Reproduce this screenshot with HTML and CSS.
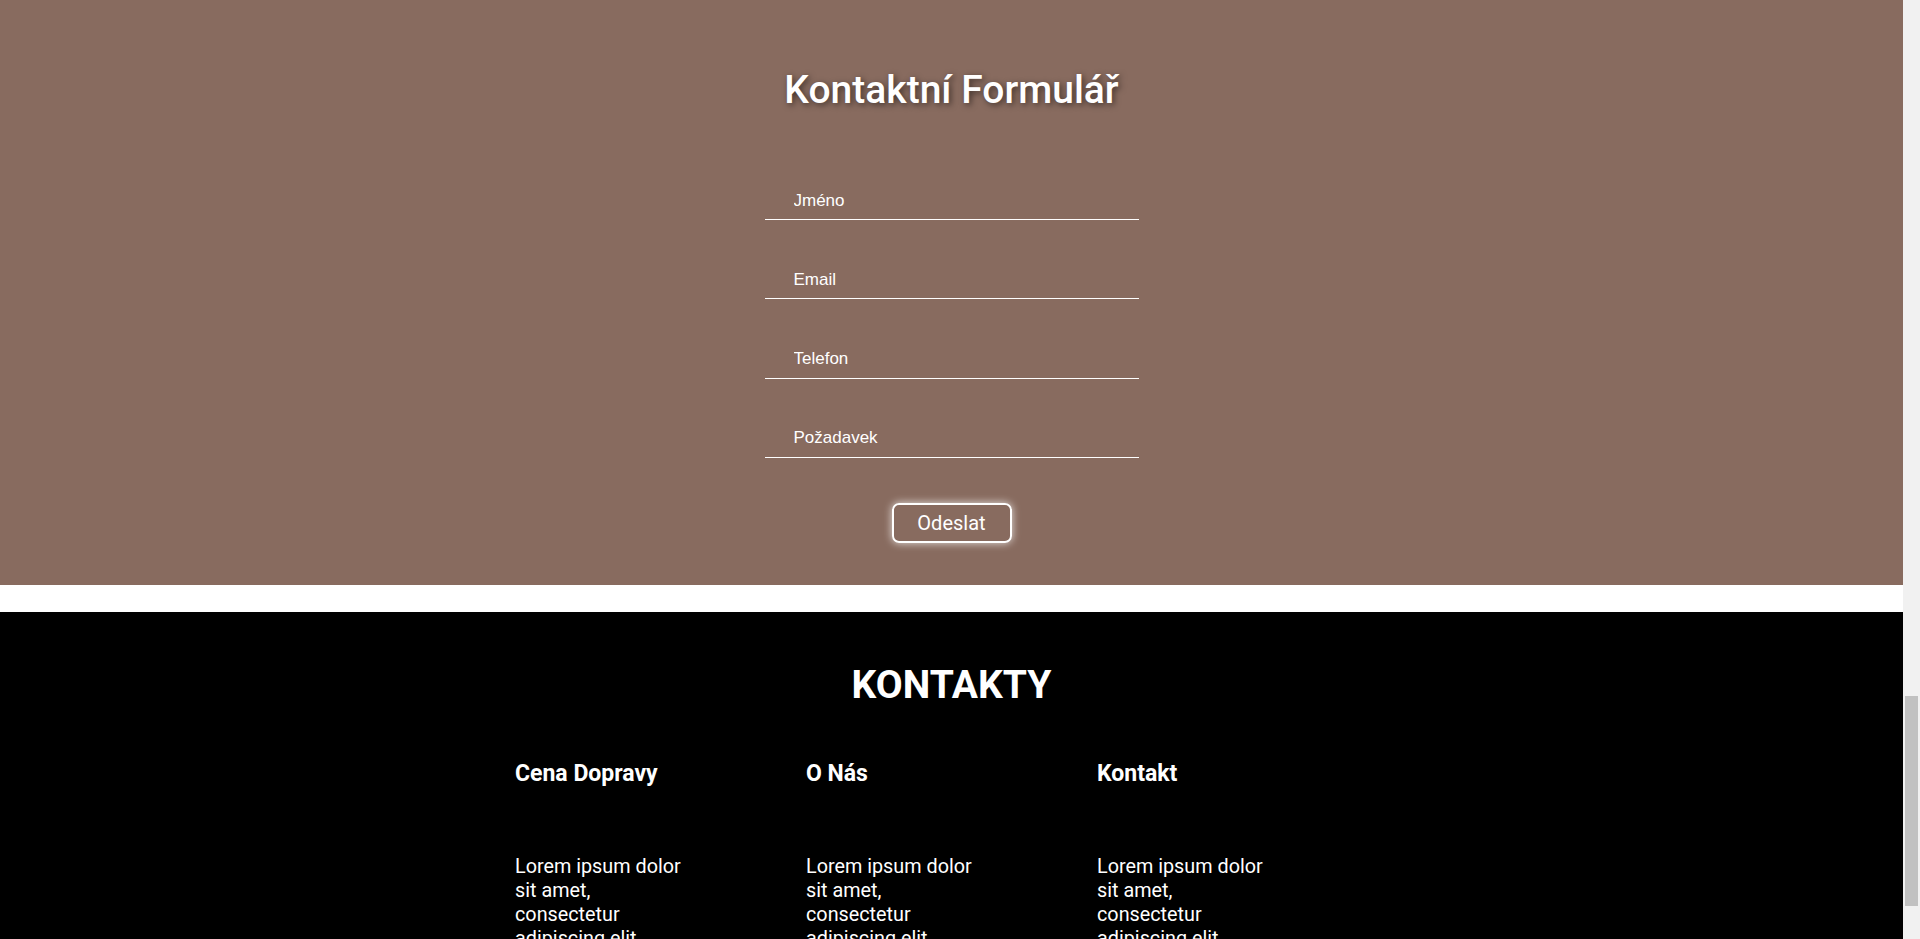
FILE: index.html
```html
<!DOCTYPE html>
<html lang="cs">
<head>
<meta charset="utf-8">
<title>Kontaktní Formulář</title>
<link rel="stylesheet" href="styles.css">
</head>
<body>
<section class="contact">
  <h1 class="contact-title">Kontaktní Formulář</h1>
  <form class="contact-form">
    <input class="field" type="text" placeholder="Jméno">
    <input class="field" type="email" placeholder="Email">
    <input class="field" type="tel" placeholder="Telefon">
    <input class="field" type="text" placeholder="Požadavek">
    <button class="submit" type="button">Odeslat</button>
  </form>
</section>
<div class="spacer"></div>
<footer class="footer">
  <h2 class="footer-title">KONTAKTY</h2>
  <div class="footer-cols">
    <div class="col">
      <h3 class="col-title">Cena Dopravy</h3>
      <p class="col-text">Lorem ipsum dolor sit amet, consectetur adipiscing elit.</p>
    </div>
    <div class="col">
      <h3 class="col-title">O Nás</h3>
      <p class="col-text">Lorem ipsum dolor sit amet, consectetur adipiscing elit.</p>
    </div>
    <div class="col">
      <h3 class="col-title">Kontakt</h3>
      <p class="col-text">Lorem ipsum dolor sit amet, consectetur adipiscing elit.</p>
    </div>
  </div>
</footer>
<div class="scrollbar" aria-hidden="true"><div class="scrollbar-thumb"></div></div>
</body>
</html>
```
FILE: styles.css
```css
body {
  margin: 0;
  padding-right: 17px;
  font-family: Roboto, "Liberation Sans", Arial, sans-serif;
  color: #fff;
  background: #fff;
}
.contact {
  background: #886b5f;
  padding: 67px 0 42px;
  display: flex;
  flex-direction: column;
  align-items: center;
}
.contact-title {
  margin: 0;
  font-size: 39px;
  font-weight: 500;
  line-height: normal;
  text-shadow: 2px 2px 6px rgba(0, 0, 0, 0.55);
}
.contact-form {
  margin-top: 67px;
  display: flex;
  flex-direction: column;
  align-items: center;
  gap: 39.33px;
}
.field {
  box-sizing: border-box;
  width: 374px;
  height: 40px;
  padding: 2px 29px 0;
  background: transparent;
  border: none;
  border-bottom: 1px solid #fff;
  color: #fff;
  font-family: "Liberation Sans", Arial, sans-serif;
  font-size: 17px;
  outline: none;
}
.field::placeholder {
  color: #fff;
  opacity: 1;
}
.submit {
  box-sizing: border-box;
  margin-top: 6px;
  width: 120px;
  height: 40px;
  background: transparent;
  border: 2px solid #fff;
  border-radius: 7px;
  box-shadow: 0 0 8px rgba(255, 255, 255, 0.8);
  color: #fff;
  font-family: Roboto, sans-serif;
  font-size: 20px;
  cursor: pointer;
}
.spacer {
  height: 27px;
  background: #fff;
}
.footer {
  background: #000;
  padding: 50px 0 40px;
}
.footer-title {
  margin: 0;
  text-align: center;
  font-size: 39px;
  font-weight: 700;
  line-height: normal;
}
.footer-cols {
  width: 873px;
  margin: 52px auto 0;
  display: grid;
  grid-template-columns: repeat(3, 1fr);
}
.col-title {
  margin: 0;
  font-size: 23px;
  font-weight: 700;
  line-height: normal;
}
.col-text {
  margin: 68px 0 0;
  max-width: 175px;
  font-size: 19.8px;
  line-height: 24px;
}
.scrollbar {
  position: fixed;
  top: 0;
  right: 0;
  width: 17px;
  height: 100vh;
  background: #f1f1f1;
}
.scrollbar-thumb {
  position: absolute;
  left: 2px;
  right: 2px;
  top: 696px;
  height: 210px;
  background: #c1c1c1;
}
```
